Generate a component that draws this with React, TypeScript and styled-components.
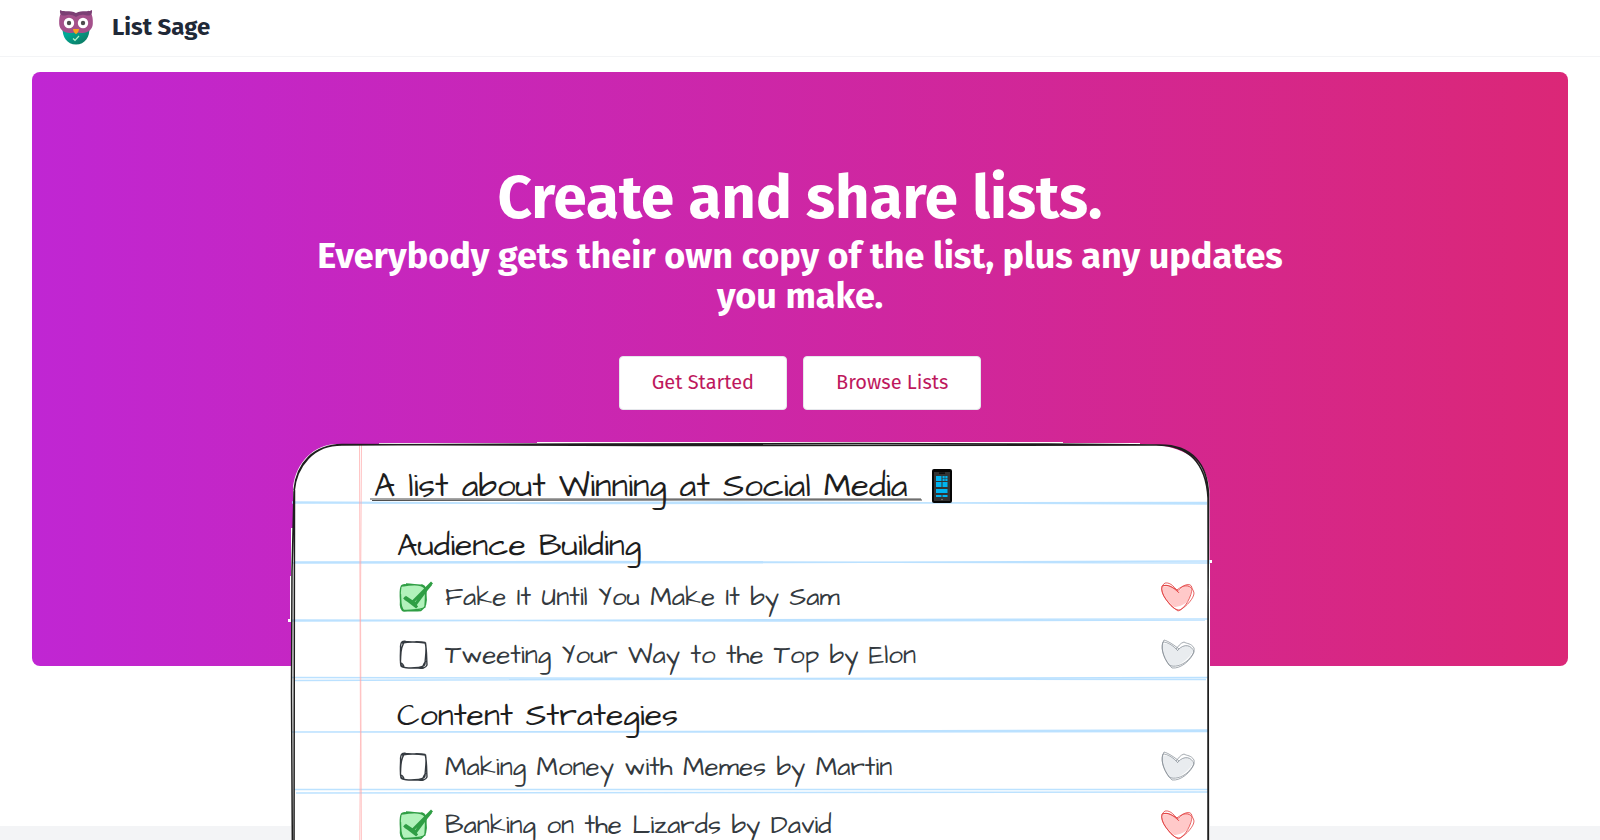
import React, { useState } from "react";
import styled, { createGlobalStyle } from "styled-components";

const GlobalStyle = createGlobalStyle`
  *, *::before, *::after { box-sizing: border-box; }
  body {
    margin: 0;
    background: #ffffff;
    font-family: "Fira Sans", "Noto Sans", "Open Sans", sans-serif;
    color: #1f2937;
  }
  h1, h2, h3, p, ul { margin: 0; padding: 0; }
`;

const Page = styled.div`
  display: flex;
  flex-direction: column;
  min-height: 100vh;
  overflow: hidden;
`;

const NavBar = styled.header`
  display: flex;
  align-items: center;
  height: 57px;
  padding: 0 56px;
  border-bottom: 1px solid #f3f4f6;
`;

const Brand = styled.a`
  display: flex;
  align-items: center;
  gap: 16px;
  padding-bottom: 2px;
  color: #1f2937;
  font-size: 24px;
  font-weight: 700;
  line-height: 32px;
  text-decoration: none;
`;

const Main = styled.main`
  padding: 15px 32px 160px;
`;

const Hero = styled.section`
  display: flex;
  flex-direction: column;
  align-items: center;
  padding: 96px 16px 0;
  border-radius: 8px;
  background: linear-gradient(to right, #c026d3, #db2777);
`;

const HeroInner = styled.div`
  width: 100%;
  max-width: 1024px;
`;

const Title = styled.h1`
  color: #ffffff;
  font-size: 60px;
  font-weight: 700;
  line-height: 60px;
  text-align: center;
`;

const Subtitle = styled.h2`
  margin-top: 8px;
  color: #ffffff;
  font-size: 36px;
  font-weight: 700;
  line-height: 40px;
  text-align: center;
`;

const Actions = styled.div`
  display: flex;
  justify-content: center;
  gap: 16px;
  margin-top: 40px;
`;

const ActionButton = styled.button`
  height: 54px;
  padding: 0 32px 2px;
  border: 1px solid #e5e7eb;
  border-radius: 4px;
  background: #ffffff;
  color: #be185d;
  font-family: inherit;
  font-size: 20px;
  font-weight: 400;
  line-height: 28px;
  cursor: pointer;
`;

const Sheet = styled.article`
  position: relative;
  max-width: 924px;
  margin-top: 32px;
  margin-bottom: -208px;
  padding: 16px 16px 20px 86px;
  color: #1e1e1e;
  font-family: Excalifont, Virgil, "Architects Daughter", "Noto Sans", sans-serif;
`;

const Paper = styled.svg`
  position: absolute;
  inset: 0;
  width: 100%;
  height: 100%;
  overflow: visible;
`;

const SheetBody = styled.div`
  position: relative;
`;

const SheetTitle = styled.h2`
  display: flex;
  align-items: center;
  gap: 24px;
  height: 56px;
  font-size: 33px;
  font-weight: 400;
  line-height: 40px;
`;

const Group = styled.section`
  margin-top: 8px;
  padding-left: 23px;
`;

const GroupTitle = styled.h3`
  height: 46px;
  font-size: 32px;
  font-weight: 400;
  line-height: 48px;
`;

const Items = styled.ul`
  list-style: none;
`;

const Item = styled.li`
  display: flex;
  align-items: center;
  justify-content: space-between;
  height: 58px;
`;

const ItemLabel = styled.label`
  display: flex;
  align-items: center;
  gap: 12px;
  color: #343a40;
  font-size: 26px;
  line-height: 32px;
  cursor: pointer;
`;

const Tick = styled.span`
  display: grid;
  width: 36px;
  height: 36px;
  & > * { grid-area: 1 / 1; }
`;

const TickInput = styled.input`
  width: 36px;
  height: 36px;
  margin: 0;
  opacity: 0;
  cursor: pointer;
`;

const HeartButton = styled.button`
  display: flex;
  padding: 0;
  border: 0;
  background: none;
  cursor: pointer;
`;

const Footer = styled.footer`
  flex: 1;
  background: #f3f4f6;
`;

function Owl() {
  return (
    <svg width="40" height="40" viewBox="56 8 40 40" aria-hidden="true">
      <defs>
        <linearGradient id="belly" x1="0" y1="0" x2="1" y2="1">
          <stop offset="0.3" stopColor="#00a896" />
          <stop offset="0.8" stopColor="#0b8069" />
        </linearGradient>
      </defs>
      <path d="M62.500 28C62 38 67 45.500 76 45.500S90 38 89.500 28Z" fill="url(#belly)" />
      <path d="M61 14C59.500 17 59 20 59.200 25C59.500 30.500 64 34 69.500 34C73 34 74 33.500 76 33.500S79 34 82.500 34C88 34 92.500 30.500 92.800 25C93 20 92.500 17 91 14L76 16Z" fill="#a4508b" />
      <path d="M60 11C63 13.500 70 10.500 76 14C82 10.500 89 13.500 92 11C92.500 16 90 17.500 85 16C81 15.500 79 16.500 76 18C73 16.500 71 15.500 67 16C62 17.500 59.500 16 60 11Z" fill="#7b3f74" />
      <circle cx="69" cy="24" r="5.200" fill="#fff" />
      <circle cx="83" cy="24" r="5.200" fill="#fff" />
      <circle cx="69" cy="24" r="2.200" fill="#4d4d4d" />
      <circle cx="83" cy="24" r="2.200" fill="#4d4d4d" />
      <path d="M73 30H79C79 32 77.500 34 76 35.300C74.500 34 73 32 73 30Z" fill="#f9a11b" />
      <path d="M73 39.500L75 41.300L79 37" fill="none" stroke="#b5f5c8" strokeWidth="1.200" />
    </svg>
  );
}

function PaperDrawing() {
  return (
    <Paper viewBox="0 0 924 432" preserveAspectRatio="none" aria-hidden="true">
      <path
        d="M50 2L91 2V1H249V0H775V1H852V2C900 2 921 22 921.500 50V118H924V121H922V432H3V180H0V177H2V134H3V86H5V45C8 20 26 2 50 2Z"
        fill="#fff"
      />
      <g fill="none" stroke="#a5d8ff" strokeWidth="1.500" opacity="0.75">
        <path d="M4 60L200 61L440 60L919 62M4 61L300 61.500L919 60.500" />
        <path d="M6 120L300 119.500L922 121M4 121L500 120.500L922 119" />
        <path d="M4 179L400 178L920 177M4 178L500 179L917 178" />
        <path d="M4 235.500L500 236.500L920 235.500M6 238.500L500 237L918 237.500" />
        <path d="M4 290L400 289.500L920 288M6 290L500 290L921 289.500" />
        <path d="M6 347.500L500 347.500L920 347.500M8 351L500 350.500L920 350" />
      </g>
      <g fill="none" stroke="#ffa8a8" strokeWidth="1" opacity="0.7">
        <path d="M71.500 3L72 150L72.500 300L71.500 432" />
        <path d="M73.500 3L72.500 160L73 300L73.500 432" />
      </g>
      <path
        d="M6 48C9 20 26 3 54 3L300 2L570 1.500L760 2L872 3C904 3 919.500 22 920.500 52L920 180L920 432M4.500 432L3.500 250L4 130L6 50C8 24 26 2.500 54 2.500L360 3.500L868 3C900 3 918 20 920 56L920.500 432M6 432L6.500 48"
        fill="none"
        stroke="#1e1e1e"
        strokeWidth="1.500"
      />
      <path d="M82 57L633 57M84 58.500L400 58L634 58" fill="none" stroke="#1e1e1e" strokeWidth="1" opacity="0.8" />
    </Paper>
  );
}

function Phone() {
  return (
    <svg width="20" height="34" viewBox="0 0 20 34" aria-hidden="true">
      <rect width="20" height="34" rx="2" fill="#050505" />
      <rect x="2" y="3" width="16" height="29" fill="#333" />
      <rect x="7" y="3.500" width="6" height="1.200" fill="#000" />
      <path d="M4 7H9.500V12H4ZM10.500 7H12.700V9.200H10.500ZM13.300 7H15.500V9.200H13.300ZM10.500 9.800H12.700V12H10.500ZM13.300 9.800H15.500V12H13.300ZM4 13H9.500V18H4ZM10.500 13H15.500V18H10.500ZM4 20H15.500V24H4ZM4 26H9.500V28H4ZM10.500 26H15.500V28H10.500Z" fill="#00b4f0" />
      <circle cx="10" cy="30.500" r="0.700" fill="#999" />
    </svg>
  );
}

function TickDrawing({ checked }: { checked: boolean }) {
  return (
    <svg width="36" height="36" viewBox="0 0 36 36" aria-hidden="true">
      {checked ? (
        <>
          <path d="M8 6L23 6.500L28 9L28 27L25 31H6L4 28L4 9Z" fill="#b2f2bb" />
          <path
            d="M9 5C16 5 20 6.500 25 6C29 7 29.500 11 29 16C30 23 29.500 28 24 31.500C17 32.500 12 31.500 7 32C3 31 3 27 3.500 22C3 15 3 11 4 8C5 4.500 8 5.500 11 6M5 7C14 5.500 25 5 27.500 9C29.500 15 28 22 28 28C24 32 13 30.500 7 31.500C3 29 4 23 3.500 15"
            fill="none"
            stroke="#2f9e44"
            strokeWidth="1.300"
          />
          <path d="M7 18.500L20 28.500L15.500 23L35 3.500M8 18L18.500 25L25 16L34 5M8 19.500L18 26L27 14" fill="none" stroke="#2f9e44" strokeWidth="2.800" />
        </>
      ) : (
        <path
          d="M8 4.500C15 5.500 22 4 28 5.500C30 11 29.500 22 30 28C28 32.500 23 31 18 31C12 30.500 7 32 4 29C2.500 22 4 12 3.500 9C4 4 6 4 9 4.500M5 6C12 4.500 22 5 28.500 6C30 14 28 21 28 27C27 31 21 30.500 14 31C7 31 3 30 3.500 24C4 17 3 10 8 4M3.500 26C5 26 7 28 7 31M29 24C27 26 26 29 25 31"
          fill="none"
          stroke="#343a40"
          strokeWidth="1.400"
        />
      )}
    </svg>
  );
}

function HeartDrawing({ liked }: { liked: boolean }) {
  return liked ? (
    <svg width="36" height="32" viewBox="0 0 36 32" aria-hidden="true">
      <path d="M18 11C14 6 6 4 3 6C1 13 8 21 14 26C18 26 27 24 30 16C32 9 31 4 28 4C24 4 21 8 18 11Z" fill="#ffc9c9" />
      <path
        d="M18 11C13 6 7 3 2 5C0 13 9 24 18 30C25 28 32 15 32 7C31 0 22 5 17 9M19 12C15 7 11 1 5 2C-1 6 2 14 8 21C12 27 16 29 20 29C27 25 34 17 34 12C33 6 27 3 22 6C20 8 19 10 17 9C12 6 8 3 3 5"
        fill="none"
        stroke="#e03131"
        strokeWidth="1"
        opacity="0.75"
      />
    </svg>
  ) : (
    <svg width="36" height="32" viewBox="0 0 36 32" aria-hidden="true">
      <path d="M18 11C14 7 7 3 3 5C0 9 6 21 11 27C16 28 25 24 33 13C32 5 24 4 18 11Z" fill="#e9ecef" />
      <path
        d="M18 12C13 6 7 3 3 3C0 10 5 22 12 29C21 30 31 21 34 13C32 6 24 4 18 11M19 10C14 6 8 2 4 1C0 8 3 18 9 26C14 29 22 26 27 22C32 17 35 13 34 9C31 4 27 5 24 3C20 4 18 8 16 10"
        fill="none"
        stroke="#868e96"
        strokeWidth="1"
        opacity="0.75"
      />
    </svg>
  );
}

type Entry = { text: string; done: boolean; liked: boolean };

const groups: { name: string; entries: Entry[] }[] = [
  {
    name: "Audience Building",
    entries: [
      { text: "Fake It Until You Make It by Sam", done: true, liked: true },
      { text: "Tweeting Your Way to the Top by Elon", done: false, liked: false },
    ],
  },
  {
    name: "Content Strategies",
    entries: [
      { text: "Making Money with Memes by Martin", done: false, liked: false },
      { text: "Banking on the Lizards by David", done: true, liked: true },
    ],
  },
];

function ListItem({ entry }: { entry: Entry }) {
  const [done, setDone] = useState(entry.done);
  const [liked, setLiked] = useState(entry.liked);
  return (
    <Item>
      <ItemLabel>
        <Tick>
          <TickDrawing checked={done} />
          <TickInput type="checkbox" checked={done} onChange={() => setDone(!done)} />
        </Tick>
        {entry.text}
      </ItemLabel>
      <HeartButton type="button" aria-label={"Like " + entry.text} aria-pressed={liked} onClick={() => setLiked(!liked)}>
        <HeartDrawing liked={liked} />
      </HeartButton>
    </Item>
  );
}

export default function App() {
  return (
    <Page>
      <GlobalStyle />
      <NavBar>
        <Brand href="/">
          <Owl />
          List Sage
        </Brand>
      </NavBar>
      <Main>
        <Hero>
          <HeroInner>
            <Title>Create and share lists.</Title>
            <Subtitle>Everybody gets their own copy of the list, plus any updates you make.</Subtitle>
            <Actions>
              <ActionButton type="button">Get Started</ActionButton>
              <ActionButton type="button">Browse Lists</ActionButton>
            </Actions>
            <Sheet>
              <PaperDrawing />
              <SheetBody>
                <SheetTitle>
                  A list about Winning at Social Media
                  <Phone />
                </SheetTitle>
                {groups.map((group) => (
                  <Group key={group.name}>
                    <GroupTitle>{group.name}</GroupTitle>
                    <Items>
                      {group.entries.map((entry) => (
                        <ListItem key={entry.text} entry={entry} />
                      ))}
                    </Items>
                  </Group>
                ))}
              </SheetBody>
            </Sheet>
          </HeroInner>
        </Hero>
      </Main>
      <Footer />
    </Page>
  );
}
